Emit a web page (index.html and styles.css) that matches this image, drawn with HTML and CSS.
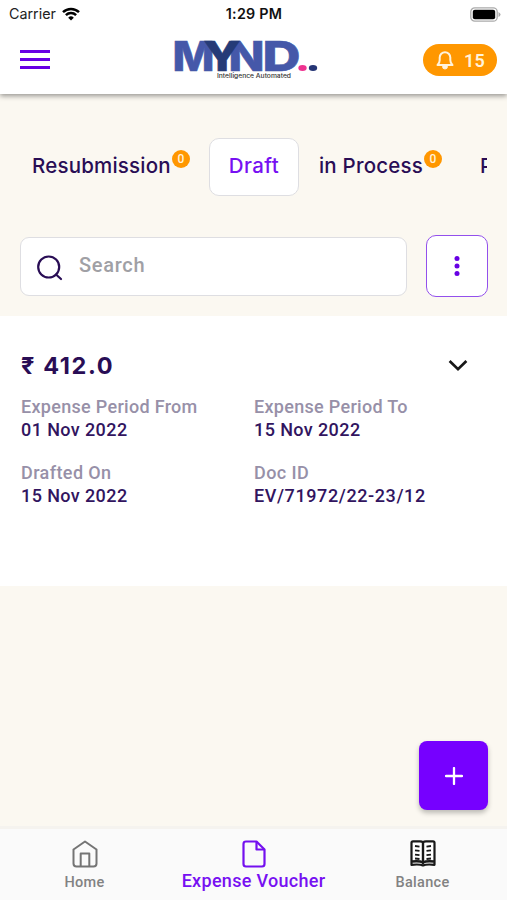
FILE: index.html
```html
<!DOCTYPE html>
<html lang="en">
<head>
<meta charset="utf-8">
<title>Expense Voucher</title>
<link rel="stylesheet" href="styles.css">
</head>
<body>
<div class="app">
  <header class="top">
    <div class="status">
      <div class="carrier"><span>Carrier</span>
        <svg width="18" height="14" viewBox="0 0 18 14" fill="none" stroke="#000" stroke-width="2.500"><path d="M1 5.200a11.500 11.500 0 0 1 16 0M3.900 8.200a7.300 7.300 0 0 1 10.200 0"/><path d="M9 13.500 6.200 10.700a4 4 0 0 1 5.600 0z" fill="#000" stroke="none"/></svg>
      </div>
      <time class="clock">1:29 PM</time>
      <svg class="battery" width="31" height="15" viewBox="0 0 31 15"><rect x=".8" y=".8" width="26.400" height="13.400" rx="4" fill="#fff" stroke="#aaa" stroke-width="1.300"/><rect x="2.800" y="2.800" width="22.400" height="9.400" rx="2" fill="#000"/><path d="M28.500 5v5q2-1 2-2.500t-2-2.500" fill="#aaa"/></svg>
    </div>
    <div class="bar">
      <button class="menu" aria-label="Menu"><i></i><i></i><i></i></button>
      <svg class="logo" width="146" height="42" viewBox="0 0 146 42">
        <g class="wordmark">
          <text x="-.5" y="32.500" textLength="42" lengthAdjust="spacingAndGlyphs">M</text>
          <text x="55.500" y="32.500" textLength="36" lengthAdjust="spacingAndGlyphs">N</text>
          <text x="89.500" y="32.500" textLength="38" lengthAdjust="spacingAndGlyphs">D</text>
          <text class="wordmark-y" x="30.500" y="32.500" textLength="37" lengthAdjust="spacingAndGlyphs">Y</text>
        </g>
        <text class="tagline" x="44" y="39.500" textLength="74" lengthAdjust="spacingAndGlyphs">Intelligence Automated</text>
        <ellipse cx="129.500" cy="30" rx="4.200" ry="3" fill="#ee3390"/><ellipse cx="140" cy="30" rx="4.200" ry="3" fill="#253575"/>
      </svg>
      <div class="alerts">
        <svg width="18" height="20" viewBox="0 0 18 20" fill="none" stroke="#fff3dc" stroke-width="2" stroke-linejoin="round"><path d="M1.500 15q2.200-1.800 2.200-5V7.500a5.300 5.300 0 0 1 10.600 0V10q0 3.200 2.200 5z"/><path d="M6.500 16.500a2.500 2.500 0 0 0 5 0z" fill="#fff3dc" stroke-width="1"/></svg>
        <span>15</span>
      </div>
    </div>
  </header>

  <nav class="tabs">
    <div class="tab resub"><span>Resubmission</span><b class="count">0</b></div>
    <div class="tab active"><span>Draft</span></div>
    <div class="tab process"><span>in Process</span><b class="count">0</b></div>
    <div class="tab next"><span>P</span></div>
  </nav>

  <section class="tools">
    <div class="search">
      <svg width="28" height="28" viewBox="0 0 28 28" fill="none" stroke="#290d55" stroke-width="2.200" stroke-linecap="round"><circle cx="12.700" cy="13" r="10.500"/><path d="m20 20.500 5 4.500"/></svg>
      <span>Search</span>
    </div>
    <button class="more" aria-label="More"><svg width="6" height="22" viewBox="0 0 6 22" fill="#6700e4"><circle cx="3" cy="3.500" r="2.500"/><circle cx="3" cy="11" r="2.500"/><circle cx="3" cy="18.500" r="2.500"/></svg></button>
  </section>

  <main class="card">
    <div class="card-head">
      <h1>₹ 412.0</h1>
      <svg width="20" height="14" viewBox="0 0 20 14" fill="none" stroke="#171717" stroke-width="2.700"><path d="m1.600 2 8.400 8.200L18.400 2"/></svg>
    </div>
    <dl class="fields">
      <div><dt class="period">Expense Period From</dt><dd>01 Nov 2022</dd></div>
      <div><dt class="period">Expense Period To</dt><dd>15 Nov 2022</dd></div>
      <div><dt>Drafted On</dt><dd>15 Nov 2022</dd></div>
      <div><dt>Doc ID</dt><dd class="doc">EV/71972/22-23/12</dd></div>
    </dl>
  </main>

  <section class="space">
    <button class="add" aria-label="Add"><svg width="18" height="18" viewBox="0 0 18 18" stroke="#fff" stroke-width="2.300" stroke-linecap="round"><path d="M9 1v16M1 9h16"/></svg></button>
  </section>

  <footer class="bottom">
    <div class="item">
      <svg width="26" height="28" viewBox="0 0 26 28" fill="none" stroke="#747474" stroke-width="2" stroke-linejoin="round"><path d="M1.500 9.500 13 1.500l11.500 8v14q0 3-3 3h-17q-3 0-3-3z"/><path d="M8.700 26V13.500h8.600V26"/></svg>
      <span>Home</span>
    </div>
    <div class="item current">
      <svg width="24" height="28" viewBox="0 0 24 28" fill="none" stroke="#7410ef" stroke-width="2.200" stroke-linejoin="round"><path d="M14.500 1.500H4q-2.500 0-2.500 2.500v20q0 2.500 2.500 2.500h16q2.500 0 2.500-2.500V9.500z"/><path d="M14.500 1.500v8h8"/></svg>
      <span>Expense Voucher</span>
    </div>
    <div class="item">
      <svg width="26" height="28" viewBox="0 0 26 28" fill="none" stroke="#181818" stroke-width="2.200" stroke-linejoin="round"><path d="M3 1.300h7q2 0 3 1 1-1 3-1h7q1.500 0 1.500 1.500v22q-8.500-.8-11.500.7-3-1.500-11.500-.7v-22q0-1.500 1.500-1.500z" fill="#fff"/><path d="M13 2.500v22M2 21.500q8-.8 11 1 3-1.800 11-1" stroke-width="2.400"/><path d="m5 6 4.500.6M5 10.300l4.500.6M5 14.600l4.500.6M5 18.500l4.500.5M21 6l-4.500.6M21 10.300l-4.500.6M21 14.600l-4.500.6M21 18.500l-4.500.5" stroke-width="1.800"/></svg>
      <span>Balance</span>
    </div>
  </footer>
</div>
</body>
</html>
```
FILE: styles.css
```css
* { box-sizing: border-box; }
body { margin: 0; font-family: Roboto, "Noto Sans", sans-serif; }
button { padding: 0; border: 0; background: none; }
svg { display: block; flex: none; }
.app { width: 507px; height: 900px; overflow: hidden; display: flex; flex-direction: column; background: #fbf8f1; }
.top { position: relative; height: 94px; flex: none; background: #fff; box-shadow: 0 2px 5px rgba(0,0,0,.4); }
.status { height: 28px; padding: 0 6px 0 9px; display: grid; grid-template-columns: 1fr auto 1fr; align-items: center; font: 400 14.300px/28px Inter, sans-serif; color: #222; }
.carrier { display: flex; align-items: center; gap: 6px; }
.clock { font-weight: 600; color: #111; letter-spacing: .25px; margin-right: 2px; }
.battery { justify-self: end; }
.bar { height: 66px; padding: 0 10px 0 20px; display: grid; grid-template-columns: 153px 146px 1fr; align-items: start; }
.menu { width: 30px; margin-top: 22px; display: flex; flex-direction: column; gap: 5px; }
.menu i { height: 3px; background: #6700e4; }
.logo { margin-top: 10px; overflow: visible; }
.wordmark { font: 800 41.500px Inter, sans-serif; fill: #4558a9; stroke: #4558a9; stroke-width: .6px; }
.wordmark .wordmark-y { fill: #253b77; stroke: #253b77; }
.tagline { font: 500 5.500px Inter, sans-serif; fill: #333; }
.alerts { justify-self: end; width: 74px; height: 32px; margin-top: 16px; border-radius: 16px; background: #ff9700; color: #fff3dc; display: flex; align-items: center; gap: 10px; padding-left: 13px; font-size: 18px; font-weight: 600; letter-spacing: .2px; }
.tabs { margin: 44px 20px 0 12px; height: 58px; flex: none; display: flex; overflow: hidden; font: 500 20.500px/56px Inter, sans-serif; color: #290d55; white-space: nowrap; }
.tab { flex: none; display: flex; }
.resub { width: 197px; padding-left: 20px; letter-spacing: .2px; }
.active { width: 90px; justify-content: center; background: #fff; border: 1px solid #dedee2; border-radius: 10px; color: #7710f2; line-height: 54px; letter-spacing: .4px; }
.process { width: 162px; padding-left: 20px; letter-spacing: .2px; }
.next { padding-left: 19px; }
.count { width: 18px; height: 18px; margin: 12px 0 0 1px; border-radius: 50%; background: #ff9700; color: #fff3dc; font: 500 12px/18px Roboto, sans-serif; letter-spacing: 0; text-align: center; }
.tools { margin: 39px 19px 0 20px; flex: none; display: flex; align-items: center; gap: 19px; height: 62px; }
.search { flex: 1; height: 59px; border: 1px solid #dedee2; border-radius: 9px; background: #fff; display: flex; align-items: center; gap: 15px; padding-left: 15px; color: #a0a0a5; font-size: 20px; font-weight: 500; letter-spacing: .7px; }
.search svg { margin-top: 3px; }
.search span { margin-top: -2px; }
.more { width: 62px; height: 62px; border: 1.500px solid #9350ec; border-radius: 10px; background: #fff; display: grid; place-items: center; }
.card { margin-top: 19px; height: 270px; flex: none; background: #fff; padding: 34px 20px 0 21px; color: #290d55; }
.card-head { display: flex; justify-content: space-between; height: 32px; align-items: center; }
.card-head svg { margin-right: 19px; }
h1 { margin: 0; font: 700 23.500px/32px Inter, sans-serif; letter-spacing: 1.600px; }
.fields { margin: 13px 0 0; display: grid; grid-template-columns: 233px 1fr; row-gap: 20px; font-size: 18px; line-height: 23px; font-weight: 500; letter-spacing: .4px; white-space: nowrap; }
dt { color: #9790a8; }
.period { letter-spacing: .3px; }
dd { margin: 0; color: #32155f; }
.doc { letter-spacing: .6px; }
.space { flex: 1; padding: 155px 19px 0; display: flex; justify-content: flex-end; align-items: flex-start; }
.add { width: 69px; height: 69px; border-radius: 8px; background: #7600ff; display: grid; place-items: center; box-shadow: 0 3px 5px rgba(0,0,0,.25); }
.bottom { height: 74px; flex: none; display: grid; grid-template-columns: repeat(3, 1fr); border-top: 3px solid #f5f3ef; background: #fafafa; }
.item { display: flex; flex-direction: column; align-items: center; padding-top: 11px; color: #828282; font-size: 14.500px; font-weight: 500; line-height: 22px; letter-spacing: .3px; white-space: nowrap; }
.item span { margin-top: 4px; }
.current { color: #7710f2; font-size: 18px; }
.current span { margin-top: 2px; }
```
